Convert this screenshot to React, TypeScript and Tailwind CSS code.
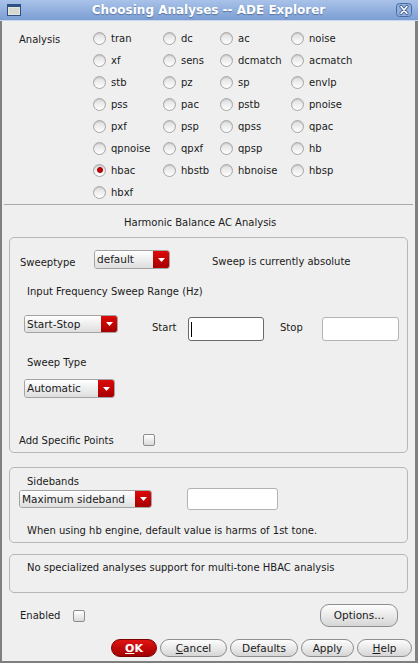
import React from 'react';

const rows = [
  ['tran', 'dc', 'ac', 'noise'],
  ['xf', 'sens', 'dcmatch', 'acmatch'],
  ['stb', 'pz', 'sp', 'envlp'],
  ['pss', 'pac', 'pstb', 'pnoise'],
  ['pxf', 'psp', 'qpss', 'qpac'],
  ['qpnoise', 'qpxf', 'qpsp', 'hb'],
  ['hbac', 'hbstb', 'hbnoise', 'hbsp'],
  ['hbxf'],
];

function Radio({ label, checked }: { label: string; checked?: boolean }) {
  return (
    <div className="flex items-center gap-[5px]">
      <span className="w-[13px] h-[13px] rounded-full border border-[#a6a6a6] bg-linear-to-b from-[#dedede] to-white flex items-center justify-center shadow-[inset_0_1px_1px_rgba(0,0,0,0.12)]">
        {checked && <span className="w-[6px] h-[6px] rounded-full bg-[#d40000] border border-[#8a0000]" />}
      </span>
      <span>{label}</span>
    </div>
  );
}

function Dropdown({ text, className }: { text: string; className: string }) {
  return (
    <div className={`flex rounded-[3px] border border-[#a3a3a3] overflow-hidden ${className}`}>
      <div className="flex-1 bg-linear-to-b from-white to-[#dedede] pl-[2px] flex items-center leading-none text-[10.5px]">{text}</div>
      <div className="w-[16px] bg-linear-to-b from-[#dc0a0a] to-[#a80000] flex items-center justify-center">
        <svg width="7" height="4" viewBox="0 0 7 4">
          <path d="M0 0 H7 L3.5 4 Z" fill="white" />
        </svg>
      </div>
    </div>
  );
}

function Checkbox() {
  return <span className="w-[12px] h-[12px] rounded-[2px] border border-[#8c8c8c] bg-linear-to-b from-white to-[#dadada]" />;
}

function Btn({ children, w }: { children: React.ReactNode; w: string }) {
  return (
    <button className={`h-full ${w} rounded-[9px] border border-[#8e8e8e] bg-linear-to-b from-[#fdfdfd] to-[#d6d6d6] text-[10.5px] text-[#1a1a1a] leading-none`}>
      {children}
    </button>
  );
}

export default function App() {
  return (
    <div className="w-[418px] h-[663px] flex flex-col bg-[#efefef] text-[10px] text-[#1a1a1a] font-['DejaVu_Sans',sans-serif]">
      {/* title bar */}
      <div className="h-[21px] flex items-center pl-[7px] pr-[6px] bg-linear-to-b from-[#a9c2e9] to-[#7c9ed3] border-b border-[#c9d7ec]">
        <svg width="14" height="12" viewBox="0 0 14 12">
          <rect x="0.5" y="0.5" width="13" height="11" fill="#e2e5da" stroke="#2f4f88" />
          <rect x="0" y="0" width="14" height="3" fill="#2f4f88" />
          <rect x="2" y="4" width="10" height="6" fill="#d6d9cd" />
        </svg>
        <div className="flex-1 text-center text-white font-bold text-[12px] [text-shadow:0_1px_1px_rgba(30,50,90,0.45)]">
          Choosing Analyses -- ADE Explorer
        </div>
        <svg width="16" height="14" viewBox="0 0 16 14">
          <rect x="0.5" y="0.5" width="15" height="13" rx="3" fill="#8fafdf" stroke="#4a6ca2" />
          <path d="M5 3.5 L11 10.5 M11 3.5 L5 10.5" stroke="#3c5a8c" strokeWidth="3.2" strokeLinecap="round" />
          <path d="M5 3.5 L11 10.5 M11 3.5 L5 10.5" stroke="white" strokeWidth="1.6" strokeLinecap="round" />
        </svg>
      </div>

      {/* body */}
      <div className="flex-1 flex flex-col border-l-2 border-r-[3px] border-b-2 border-[#7f7f7f]">
        <div className="flex pt-[6px]">
          <div className="w-[91px] pl-[17px] pt-[2px] leading-[22px]">Analysis</div>
          <div className="grid grid-cols-[70px_57px_71px_auto] auto-rows-[22px] items-center">
            {rows.map((r) =>
              r.map((name) => <Radio key={name} label={name} checked={name === 'hbac'} />)
            )}
          </div>
        </div>
        <div className="h-px bg-[#a9a9a9] mx-[2px] mt-[1px]" />

        <div className="mt-[11px] pl-[122px] leading-[14px]">Harmonic Balance AC Analysis</div>

        {/* sweep group */}
        <div className="mt-[7px] ml-[7px] w-[399px] h-[216px] border border-[#b7b7b7] rounded-[5px] flex flex-col">
          <div className="mt-[12px] flex h-[19px]">
            <span className="ml-[10px] w-[74px] mt-[6px] leading-[14px]">Sweeptype</span>
            <Dropdown text="default" className="w-[76px] h-[19px]" />
            <span className="ml-[42px] mt-[5px] leading-[14px]">Sweep is currently absolute</span>
          </div>
          <div className="mt-[16px] pl-[17px] leading-[14px]">Input Frequency Sweep Range (Hz)</div>
          <div className="mt-[16px] flex items-start">
            <Dropdown text="Start-Stop" className="ml-[14px] w-[94px] h-[18px]" />
            <span className="ml-[34px] w-[36px] mt-[6px] leading-[14px]">Start</span>
            <div className="mt-[2px] w-[76px] h-[24px] bg-white border border-[#6a6a6a] rounded-[3px] flex items-center pl-[2px]">
              <span className="w-px h-[15px] bg-black" />
            </div>
            <span className="ml-[16px] w-[42px] mt-[6px] leading-[14px]">Stop</span>
            <div className="mt-[2px] w-[77px] h-[24px] bg-white border border-[#b3b3b3] rounded-[3px]" />
          </div>
          <div className="mt-[15px] pl-[17px] leading-[14px]">Sweep Type</div>
          <Dropdown text="Automatic" className="mt-[9px] ml-[14px] w-[91px] h-[19px]" />
          <div className="mt-[35px] h-[14px] flex items-center">
            <span className="ml-[9px] w-[124px]">Add Specific Points</span>
            <Checkbox />
          </div>
        </div>

        {/* sidebands group */}
        <div className="mt-[14px] ml-[7px] w-[399px] h-[76px] border border-[#b7b7b7] rounded-[5px] flex flex-col">
          <div className="mt-[7px] pl-[17px] leading-[14px]">Sidebands</div>
          <div className="-mt-px h-[22px] flex items-center">
            <Dropdown text="Maximum sideband" className="ml-[9px] w-[133px] h-[18px]" />
            <div className="ml-[35px] w-[91px] h-[22px] bg-white border border-[#b3b3b3] rounded-[3px]" />
          </div>
          <div className="mt-[14px] pl-[17px] leading-[14px]">When using hb engine, default value is harms of 1st tone.</div>
        </div>

        <div className="mt-[11px] ml-[7px] w-[399px] h-[39px] border border-[#b7b7b7] rounded-[5px] pt-[6px] pl-[17px] leading-[14px]">
          No specialized analyses support for multi-tone HBAC analysis
        </div>

        <div className="mt-[11px] h-[23px] flex items-center">
          <span className="ml-[18px] w-[53px]">Enabled</span>
          <Checkbox />
          <div className="ml-auto mr-[17px] h-[23px] flex">
            <Btn w="w-[78px]">Options...</Btn>
          </div>
        </div>

        <div className="mt-[12px] h-[18px] flex justify-end gap-[3px] mr-[3px]">
          <button className="h-full w-[46px] rounded-[9px] border border-[#7a0000] bg-linear-to-b from-[#e01414] to-[#a30000] text-white font-bold text-[11px] leading-none">
            <span className="underline">O</span>K
          </button>
          <Btn w="w-[67px]">
            <span className="underline">C</span>ancel
          </Btn>
          <Btn w="w-[68px]">Defaults</Btn>
          <Btn w="w-[53px]">Apply</Btn>
          <Btn w="w-[55px]">
            <span className="underline">H</span>elp
          </Btn>
        </div>
      </div>
    </div>
  );
}
